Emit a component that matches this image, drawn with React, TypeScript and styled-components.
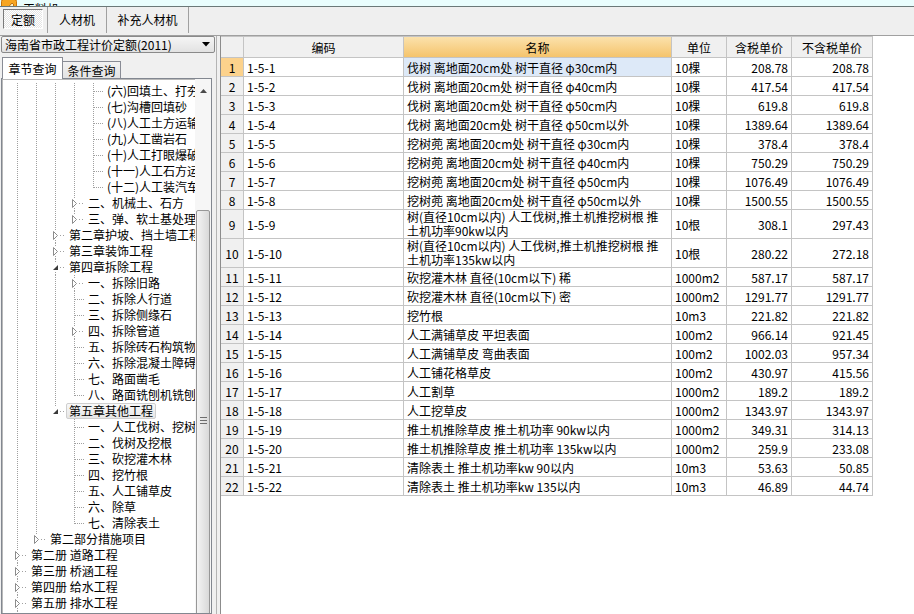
import styled, { createGlobalStyle, css } from 'styled-components'

const GlobalStyle = createGlobalStyle`
  html, body {
    margin: 0;
    padding: 0;
    background: #fff;
  }
  body {
    font-family: 'Noto Sans CJK SC', 'Noto Sans', sans-serif;
    font-size: 12px;
    color: #000;
    overflow: hidden;
  }
`

const LINE = '#a0a0a0'
const GRID = '#c4c4c4'

type Kind = 'open' | 'closed' | 'leaf'

interface TreeNode {
  text: string
  level: number
  kind: Kind
  guides: number[]
  last?: boolean
  selected?: boolean
}

const leaf = (text: string, level: number, guides: number[], last = false): TreeNode => ({
  text,
  level,
  kind: 'leaf',
  guides,
  last,
})

const tree: TreeNode[] = [
  leaf('(六)回填土、打夯', 4, [0, 1, 2, 3]),
  leaf('(七)沟槽回填砂', 4, [0, 1, 2, 3]),
  leaf('(八)人工土方运输', 4, [0, 1, 2, 3]),
  leaf('(九)人工凿岩石', 4, [0, 1, 2, 3]),
  leaf('(十)人工打眼爆破石方', 4, [0, 1, 2, 3]),
  leaf('(十一)人工石方运输', 4, [0, 1, 2, 3]),
  leaf('(十二)人工装汽车运土方', 4, [0, 1, 2, 3], true),
  { text: '二、机械土、石方', level: 3, kind: 'closed', guides: [0, 1, 2] },
  { text: '三、弹、软土基处理', level: 3, kind: 'closed', guides: [0, 1, 2], last: true },
  { text: '第二章护坡、挡土墙工程', level: 2, kind: 'closed', guides: [0, 1] },
  { text: '第三章装饰工程', level: 2, kind: 'closed', guides: [0, 1] },
  { text: '第四章拆除工程', level: 2, kind: 'open', guides: [0, 1] },
  { text: '一、拆除旧路', level: 3, kind: 'closed', guides: [0, 1, 2] },
  leaf('二、拆除人行道', 3, [0, 1, 2]),
  leaf('三、拆除侧缘石', 3, [0, 1, 2]),
  { text: '四、拆除管道', level: 3, kind: 'closed', guides: [0, 1, 2] },
  leaf('五、拆除砖石构筑物', 3, [0, 1, 2]),
  leaf('六、拆除混凝土障碍物', 3, [0, 1, 2]),
  leaf('七、路面凿毛', 3, [0, 1, 2]),
  leaf('八、路面铣刨机铣刨', 3, [0, 1, 2], true),
  { text: '第五章其他工程', level: 2, kind: 'open', guides: [0, 1], last: true, selected: true },
  leaf('一、人工伐树、挖树根', 3, [0, 1]),
  leaf('二、伐树及挖根', 3, [0, 1]),
  leaf('三、砍挖灌木林', 3, [0, 1]),
  leaf('四、挖竹根', 3, [0, 1]),
  leaf('五、人工铺草皮', 3, [0, 1]),
  leaf('六、除草', 3, [0, 1]),
  leaf('七、清除表土', 3, [0, 1], true),
  { text: '第二部分措施项目', level: 1, kind: 'closed', guides: [0], last: true },
  { text: '第二册 道路工程', level: 0, kind: 'closed', guides: [] },
  { text: '第三册 桥涵工程', level: 0, kind: 'closed', guides: [] },
  { text: '第四册 给水工程', level: 0, kind: 'closed', guides: [] },
  { text: '第五册 排水工程', level: 0, kind: 'closed', guides: [] },
  { text: '第六册 燃气与集中供热工程', level: 0, kind: 'closed', guides: [] },
]

interface Quota {
  code: string
  name: string | [string, string]
  unit: string
  tax: string
  notax: string
}

const quotas: Quota[] = [
  { code: '1-5-1', name: '伐树 离地面20cm处 树干直径 φ30cm内', unit: '10棵', tax: '208.78', notax: '208.78' },
  { code: '1-5-2', name: '伐树 离地面20cm处 树干直径 φ40cm内', unit: '10棵', tax: '417.54', notax: '417.54' },
  { code: '1-5-3', name: '伐树 离地面20cm处 树干直径 φ50cm内', unit: '10棵', tax: '619.8', notax: '619.8' },
  { code: '1-5-4', name: '伐树 离地面20cm处 树干直径 φ50cm以外', unit: '10棵', tax: '1389.64', notax: '1389.64' },
  { code: '1-5-5', name: '挖树蔸 离地面20cm处 树干直径 φ30cm内', unit: '10棵', tax: '378.4', notax: '378.4' },
  { code: '1-5-6', name: '挖树蔸 离地面20cm处 树干直径 φ40cm内', unit: '10棵', tax: '750.29', notax: '750.29' },
  { code: '1-5-7', name: '挖树蔸 离地面20cm处 树干直径 φ50cm内', unit: '10棵', tax: '1076.49', notax: '1076.49' },
  { code: '1-5-8', name: '挖树蔸 离地面20cm处 树干直径 φ50cm以外', unit: '10棵', tax: '1500.55', notax: '1500.55' },
  {
    code: '1-5-9',
    name: ['树(直径10cm以内) 人工伐树,推土机推挖树根 推', '土机功率90kw以内'],
    unit: '10根',
    tax: '308.1',
    notax: '297.43',
  },
  {
    code: '1-5-10',
    name: ['树(直径10cm以内) 人工伐树,推土机推挖树根 推', '土机功率135kw以内'],
    unit: '10根',
    tax: '280.22',
    notax: '272.18',
  },
  { code: '1-5-11', name: '砍挖灌木林 直径(10cm以下) 稀', unit: '1000m2', tax: '587.17', notax: '587.17' },
  { code: '1-5-12', name: '砍挖灌木林 直径(10cm以下) 密', unit: '1000m2', tax: '1291.77', notax: '1291.77' },
  { code: '1-5-13', name: '挖竹根', unit: '10m3', tax: '221.82', notax: '221.82' },
  { code: '1-5-14', name: '人工满铺草皮 平坦表面', unit: '100m2', tax: '966.14', notax: '921.45' },
  { code: '1-5-15', name: '人工满铺草皮 弯曲表面', unit: '100m2', tax: '1002.03', notax: '957.34' },
  { code: '1-5-16', name: '人工铺花格草皮', unit: '100m2', tax: '430.97', notax: '415.56' },
  { code: '1-5-17', name: '人工割草', unit: '1000m2', tax: '189.2', notax: '189.2' },
  { code: '1-5-18', name: '人工挖草皮', unit: '1000m2', tax: '1343.97', notax: '1343.97' },
  { code: '1-5-19', name: '推土机推除草皮 推土机功率 90kw以内', unit: '1000m2', tax: '349.31', notax: '314.13' },
  { code: '1-5-20', name: '推土机推除草皮 推土机功率 135kw以内', unit: '1000m2', tax: '259.9', notax: '233.08' },
  { code: '1-5-21', name: '清除表土 推土机功率kw 90以内', unit: '10m3', tax: '53.63', notax: '50.85' },
  { code: '1-5-22', name: '清除表土 推土机功率kw 135以内', unit: '10m3', tax: '46.89', notax: '44.74' },
]

const W = { num: 23, code: 160, name: 268, unit: 55, tax: 65, notax: 81 }

function Guide({ on }: { on: boolean }) {
  return (
    <Indent>
      {on && (
        <svg width="19" height="16">
          <line x1="9.5" y1="0" x2="9.5" y2="16" stroke={LINE} strokeDasharray="1 1" />
        </svg>
      )}
    </Indent>
  )
}

function Branch({ kind, last }: { kind: Kind; last?: boolean }) {
  const toggle = kind !== 'leaf'
  return (
    <Indent>
      <svg width="19" height="16">
        {toggle ? (
          <>
            <line x1="9.5" y1="0" x2="9.5" y2="4" stroke={LINE} strokeDasharray="1 1" />
            {!last && <line x1="9.5" y1="13" x2="9.5" y2="16" stroke={LINE} strokeDasharray="1 1" />}
            <line x1="14" y1="8.5" x2="19" y2="8.5" stroke={LINE} strokeDasharray="1 2" />
          </>
        ) : (
          <>
            <line x1="9.5" y1="0" x2="9.5" y2={last ? 9 : 16} stroke={LINE} strokeDasharray="1 1" />
            <line x1="10" y1="8.5" x2="19" y2="8.5" stroke={LINE} strokeDasharray="1 1" />
          </>
        )}
        {kind === 'closed' && <path d="M7.5 4.5 L11.5 8.5 L7.5 12.5 Z" fill="#fff" stroke="#8c8c8c" />}
        {kind === 'open' && <path d="M12 6 L12 11 L7 11 Z" fill="#3a3a3a" />}
      </svg>
    </Indent>
  )
}

export default function App() {
  return (
    <>
      <GlobalStyle />
      <Window>
        <TitleBar>
          <svg width="16" height="16" viewBox="0 0 16 16">
            <rect x="0.5" y="0.5" width="15" height="15" rx="2" fill="#f6a521" stroke="#c9740a" />
            <path d="M4 12 L11 4 L13 6 L6 13 Z" fill="#fff3c8" stroke="#a85a00" strokeWidth="0.8" />
          </svg>
          <TitleText>工料机</TitleText>
        </TitleBar>

        <TabBar>
          <TabCell $w={45}>
            <TabFace $active>定额</TabFace>
          </TabCell>
          <TabCell $w={59} $center>
            <TabFace>人材机</TabFace>
          </TabCell>
          <TabCell $w={82} $center>
            <TabFace>补充人材机</TabFace>
          </TabCell>
        </TabBar>

        <Body>
          <LeftPane>
            <Combo>
              <span>海南省市政工程计价定额(2011)</span>
              <svg width="8" height="5" viewBox="0 0 8 5">
                <path d="M0 0 L8 0 L4 4.5 Z" fill="#000" />
              </svg>
            </Combo>
            <SubTabs>
              <SubTab $active>章节查询</SubTab>
              <SubTab>条件查询</SubTab>
            </SubTabs>
            <TreeBox>
              <TreeList>
                {tree.map((n, i) => (
                  <TreeRow key={i}>
                    {Array.from({ length: n.level }, (_, l) => (
                      <Guide key={l} on={n.guides.includes(l)} />
                    ))}
                    <Branch kind={n.kind} last={n.last} />
                    <Label $selected={n.selected}>{n.text}</Label>
                  </TreeRow>
                ))}
              </TreeList>
              <ScrollBar>
                <ArrowButton>
                  <svg width="7" height="4" viewBox="0 0 7 4">
                    <path d="M0 4 L3.5 0 L7 4 Z" fill="#4a4a4a" />
                  </svg>
                </ArrowButton>
                <Track />
                <Thumb>
                  <svg width="7" height="7" viewBox="0 0 7 7">
                    <path d="M0 0.5 H7 M0 3.5 H7 M0 6.5 H7" stroke="#6e6e6e" />
                  </svg>
                </Thumb>
              </ScrollBar>
            </TreeBox>
          </LeftPane>

          <Splitter />

          <GridPane>
            <Table>
              <Row $h={21}>
                <HeadCell $w={W.num} />
                <HeadCell $w={W.code}>编码</HeadCell>
                <HeadCell $w={W.name} $hot>
                  名称
                </HeadCell>
                <HeadCell $w={W.unit}>单位</HeadCell>
                <HeadCell $w={W.tax}>含税单价</HeadCell>
                <HeadCell $w={W.notax}>不含税单价</HeadCell>
              </Row>
              {quotas.map((q, i) => {
                const tall = Array.isArray(q.name)
                return (
                  <Row key={q.code} $h={tall ? 29 : 19}>
                    <NumCell $w={W.num} $current={i === 0}>
                      {i + 1}
                    </NumCell>
                    <Cell $w={W.code}>{q.code}</Cell>
                    <Cell $w={W.name} $tall={tall} $picked={i === 0}>
                      {tall ? (
                        <NameLines>
                          <span>{q.name[0]}</span>
                          <span>{q.name[1]}</span>
                        </NameLines>
                      ) : (
                        q.name
                      )}
                    </Cell>
                    <Cell $w={W.unit}>{q.unit}</Cell>
                    <Cell $w={W.tax} $right>
                      {q.tax}
                    </Cell>
                    <Cell $w={W.notax} $right>
                      {q.notax}
                    </Cell>
                  </Row>
                )
              })}
            </Table>
          </GridPane>
        </Body>
      </Window>
    </>
  )
}

const Window = styled.div`
  width: 914px;
  height: 614px;
  display: flex;
  flex-direction: column;
  overflow: hidden;
  background: #fff;
`

const TitleBar = styled.div`
  flex: none;
  height: 6px;
  display: flex;
  align-items: flex-end;
  gap: 6px;
  padding-left: 1px;
  overflow: hidden;
  background: #e9fdfd;
  border-bottom: 1px solid #6b7878;

  svg {
    flex: none;
    margin-bottom: -9px;
  }
`

const TitleText = styled.span`
  line-height: 16px;
  margin-bottom: -11px;
  font-size: 12px;
`

const TabBar = styled.div`
  flex: none;
  height: 29px;
  box-sizing: border-box;
  display: flex;
  padding-left: 3px;
  background: #efefef;
  border-bottom: 1px solid #a0a0a0;
`

const TabCell = styled.div<{ $w: number; $center?: boolean }>`
  width: ${(p) => p.$w}px;
  box-sizing: border-box;
  display: flex;
  justify-content: ${(p) => (p.$center ? 'center' : 'flex-start')};
  align-items: flex-start;
  padding-top: 2px;
  margin-bottom: 2px;
  border-right: 1px solid #a0a0a0;
`

const TabFace = styled.div<{ $active?: boolean }>`
  height: 20px;
  box-sizing: border-box;
  display: flex;
  align-items: center;
  justify-content: center;
  padding: 0 4px;
  font-size: 12px;
  border: 1px solid transparent;
  ${(p) =>
    p.$active &&
    css`
      width: 40px;
      border-color: #7a7a7a #ffffff #ffffff #7a7a7a;
      background: repeating-conic-gradient(#e4e4e4 0 25%, #ffffff 0 50%) 0 0 / 2px 2px;
    `}
`

const Body = styled.div`
  flex: 1;
  display: flex;
  min-height: 0;
`

const LeftPane = styled.div`
  width: 216px;
  flex: none;
  display: flex;
  flex-direction: column;
  background: #f0f0f0;
`

const Combo = styled.div`
  height: 17px;
  width: 214px;
  margin: 0 0 4px 1px;
  box-sizing: border-box;
  display: flex;
  align-items: center;
  justify-content: space-between;
  padding: 0 4px 0 3px;
  white-space: nowrap;
  border: 1px solid #8a8a8a;
  border-radius: 2px;
  background: linear-gradient(#f5f5f5, #e2e2e2);
  font-size: 12px;
`

const SubTabs = styled.div`
  height: 21px;
  display: flex;
  align-items: flex-end;
  padding-left: 2px;
`

const SubTab = styled.div<{ $active?: boolean }>`
  position: relative;
  box-sizing: border-box;
  display: flex;
  align-items: center;
  justify-content: center;
  font-size: 12px;
  border: 1px solid #898c95;
  border-bottom: none;
  ${(p) =>
    p.$active
      ? css`
          width: 61px;
          height: 22px;
          margin-bottom: -1px;
          background: #fff;
          z-index: 1;
        `
      : css`
          width: 58px;
          height: 17px;
          border-left: none;
          background: linear-gradient(#f2f2f2, #e3e3e3);
        `}
`

const TreeBox = styled.div`
  flex: 1;
  min-height: 0;
  width: 211px;
  margin-left: 1px;
  box-sizing: border-box;
  display: flex;
  background: #fff;
  border: 1px solid #828790;
  box-shadow: inset 1px 1px 0 #b9b9b9;
  overflow: hidden;
`

const TreeList = styled.div`
  flex: 1;
  min-width: 0;
  overflow: hidden;
  padding: 4px 0 0 6px;
`

const TreeRow = styled.div`
  height: 16px;
  display: flex;
  align-items: center;
  white-space: nowrap;
`

const Indent = styled.span`
  width: 19px;
  height: 16px;
  flex: none;
  display: block;

  svg {
    display: block;
  }
`

const Label = styled.span<{ $selected?: boolean }>`
  margin-left: 1px;
  padding: 0 2px;
  line-height: 14px;
  font-size: 12px;
  border: 1px solid transparent;
  border-radius: 2px;
  ${(p) =>
    p.$selected &&
    css`
      border-color: #cfcfcf;
      background: linear-gradient(#f8f8f8, #e6e6e6);
    `}
`

const ScrollBar = styled.div`
  width: 16px;
  flex: none;
  display: flex;
  flex-direction: column;
  background: #f6f6f6;
  overflow: hidden;
`

const ArrowButton = styled.div`
  height: 24px;
  flex: none;
  display: flex;
  align-items: center;
  justify-content: center;
`

const Track = styled.div`
  height: 107px;
  flex: none;
`

const Thumb = styled.div`
  height: 420px;
  flex: none;
  margin: 0 1px;
  box-sizing: border-box;
  display: flex;
  align-items: center;
  justify-content: center;
  border: 1px solid #979797;
  border-radius: 2px;
  background: linear-gradient(to right, #f4f4f4, #d9d9d9);
`

const Splitter = styled.div`
  width: 4px;
  flex: none;
  background: #f0f0f0;
  border-left: 1px solid #b4b4b4;
  box-sizing: border-box;
`

const GridPane = styled.div`
  flex: 1;
  display: flex;
  align-items: flex-start;
  border-left: 1px solid #8c8c8c;
  background: #fff;
`

const Table = styled.div`
  display: flex;
  flex-direction: column;
  border-top: 1px solid ${GRID};
`

const Row = styled.div<{ $h: number }>`
  display: flex;
  height: ${(p) => p.$h}px;
`

const Cell = styled.div<{ $w: number; $right?: boolean; $tall?: boolean; $picked?: boolean }>`
  width: ${(p) => p.$w}px;
  flex: none;
  box-sizing: border-box;
  display: flex;
  align-items: ${(p) => (p.$tall ? 'flex-start' : 'center')};
  justify-content: ${(p) => (p.$right ? 'flex-end' : 'flex-start')};
  padding: 0 3px;
  overflow: hidden;
  white-space: nowrap;
  font-size: 12px;
  border-right: 1px solid ${GRID};
  border-bottom: 1px solid ${GRID};
  background: ${(p) => (p.$picked ? '#dde9f8' : '#fff')};
`

const NumCell = styled(Cell)<{ $current?: boolean }>`
  justify-content: center;
  padding: 0;
  background: ${(p) => (p.$current ? '#fcd28c' : '#f0f0f0')};
`

const HeadCell = styled(Cell)<{ $hot?: boolean }>`
  justify-content: center;
  background: ${(p) => (p.$hot ? 'linear-gradient(#fbe2ac, #f5c46c)' : '#f0f0f0')};
`

const NameLines = styled.div`
  display: flex;
  flex-direction: column;
  line-height: 14px;
`
